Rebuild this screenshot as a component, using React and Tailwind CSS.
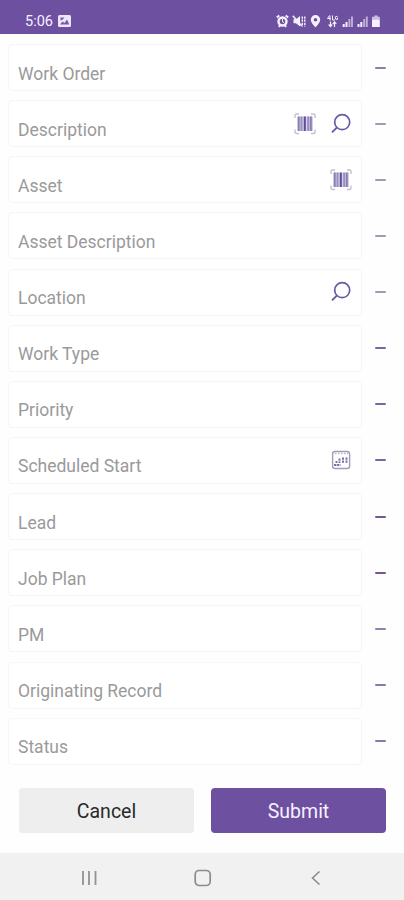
const fields = [
  { label: 'Work Order', dash: 'bg-[#8a7eae]' },
  { label: 'Description', dash: 'bg-[#a19ab1]', icons: ['barcode', 'search'] },
  { label: 'Asset', dash: 'bg-[#a19ab1]', icons: ['barcode'] },
  { label: 'Asset Description', dash: 'bg-[#a19ab1]' },
  { label: 'Location', dash: 'bg-[#a19ab1]', icons: ['search'] },
  { label: 'Work Type', dash: 'bg-[#7267a8]' },
  { label: 'Priority', dash: 'bg-[#7267a8]' },
  { label: 'Scheduled Start', dash: 'bg-[#7267a8]', icons: ['calendar'] },
  { label: 'Lead', dash: 'bg-[#745794]' },
  { label: 'Job Plan', dash: 'bg-[#745794]' },
  { label: 'PM', dash: 'bg-[#8d82b0]' },
  { label: 'Originating Record', dash: 'bg-[#8579ad]' },
  { label: 'Status', dash: 'bg-[#8579ad]' },
];

function BarcodeIcon() {
  return (
    <svg width="22" height="22" viewBox="0 0 22 22" fill="none">
      <path d="M1 5V2.5Q1 1 2.5 1H5M17 1h2.5Q21 1 21 2.5V5M21 16.500v2.500Q21 20.500 19.500 20.500H17M5 20.500H2.500Q1 20.500 1 19v-2.500" stroke="#c4c0cd" strokeWidth="1.4" />
      <path d="M3.500 3.500h15.500v14.500h-15.500z" fill="#d6d1e6" />
      <path d="M4.700 3.500v14.500M16.800 3.500v14.500" stroke="#8a7fb4" strokeWidth="2" />
      <path d="M7.500 3.500v14.500M14.200 3.500v14.500" stroke="#9a90bf" strokeWidth="2" />
      <path d="M10.800 3.500v14.500" stroke="#5f4a9c" strokeWidth="2" />
    </svg>
  );
}

function SearchIcon() {
  return (
    <svg width="22" height="22" viewBox="0 0 22 22" fill="none" stroke="#6a5aa6">
      <circle cx="12.200" cy="9.200" r="7.500" strokeWidth="1.700" />
      <path d="M7 14.400L2 19.400" strokeWidth="2" />
    </svg>
  );
}

function CalendarIcon() {
  return (
    <svg width="22" height="22" viewBox="0 0 22 22" fill="none">
      <rect x="2.600" y="2.500" width="17" height="17" rx="2.500" stroke="#a29cb8" strokeWidth="1.400" />
      <path d="M5 4.500h13" stroke="#bbb5ce" strokeWidth="1.500" strokeDasharray="1.500 1.500" />
      <path d="M9.500 9.500v4.500M13 8.500v5.500M16.500 8.500v5.500" stroke="#7d71ab" strokeWidth="2" strokeDasharray="2.300 0.600" />
      <path d="M6.500 12v2M4 16h6.500" stroke="#7d71ab" strokeWidth="2" strokeDasharray="2.300 0.600" />
    </svg>
  );
}

const icons = { barcode: BarcodeIcon, search: SearchIcon, calendar: CalendarIcon };

function StatusIcons() {
  return (
    <svg width="106" height="14" viewBox="0 0 106 14" fill="none" stroke="#f6f1ff">
      {/* alarm */}
      <circle cx="6.500" cy="7.500" r="4" strokeWidth="2.400" />
      <path d="M0.800 3.500L3.300 1.500M9.700 1.500l2.500 2M2.800 12.800l1.200-1.500M10.200 12.800L9 11.300" strokeWidth="1.900" />
      <path d="M6.500 5v2.800l1.600 0.800" strokeWidth="1" />
      {/* muted, vibrate */}
      <path d="M17.500 5.200h2.500l4-3.200v10.500l-4-3.300h-2.500z" fill="#f6f1ff" stroke="none" />
      <path d="M16.800 1.800l9 10.200" strokeWidth="1.600" />
      <path d="M26.300 2.500v10M28.800 2.500v10" strokeWidth="1.400" strokeDasharray="2.200 0.900" />
      {/* location pin */}
      <path d="M39.500 1a4.700 4.700 0 0 0-4.700 4.700c0 3 4.700 7.600 4.700 7.600s4.700-4.600 4.700-7.600A4.700 4.700 0 0 0 39.500 1zm0 3a1.800 1.800 0 1 1 0 3.600 1.800 1.800 0 0 1 0-3.600z" fill="#f6f1ff" fillRule="evenodd" stroke="none" />
      {/* network type and data arrows */}
      <path d="M53.500 1.500l-2 3h3.200M54 1.500v5M56.500 1.500v4.500h2.500M61.500 2.500q-2.200-1-2.200 1.300t2.200 1.500v-1.600" strokeWidth="1" />
      <path d="M54.500 7.500v5M52.700 10.500l1.800 2 1.800-2M58.500 13V8M56.700 9.800l1.800-2 1.800 2" strokeWidth="1.200" />
      {/* signal strength */}
      <path d="M67.700 10v3M70.500 8v5" strokeWidth="2" />
      <path d="M73.400 5v8M76 2.500v10.500" strokeWidth="1.900" strokeOpacity="0.600" />
      <path d="M82.500 10v3M85.300 8v5" strokeWidth="2" />
      <path d="M88.200 5v8M90.800 2.500v10.500" strokeWidth="1.900" strokeOpacity="0.600" />
      {/* battery */}
      <path d="M98.500 1.500h3v1.300h2.300v3H96v-3h2.500z" fill="#cdbfe3" stroke="none" />
      <path d="M96 5.500h7.800v7.500H96z" fill="#f6f1ff" stroke="none" />
    </svg>
  );
}

function StatusBar() {
  return (
    <header className="flex h-[34px] items-center justify-between bg-[#6d509f] pt-2 pr-[22px] pl-[25px] text-[#f6f1ff]">
      <div className="flex items-center gap-[5px]">
        <span className="pt-px text-[14.5px] leading-[18px]">5:06</span>
        <svg width="13" height="12" viewBox="0 0 13 12">
          <path d="M1.500 0h10Q13 0 13 1.500v9Q13 12 11.500 12h-10Q0 12 0 10.500v-9Q0 0 1.500 0z" fill="#eee6fa" />
          <path d="M2 9.500l2.500-3 2 1.500L9 4.500l2.300 5zM2.500 2.500h4l-2 2.300-2 0.800z" fill="#765ca8" />
        </svg>
      </div>
      <StatusIcons />
    </header>
  );
}

function FieldRow({ label, dash, icons: names = [] }) {
  return (
    <div className="flex h-[47px] items-center gap-[13px]">
      <div className="flex h-full w-[354px] items-center justify-between rounded-[4px] border-[1.5px] border-[#f6f6f6] bg-white pr-[9px] pl-[9px]">
        <span className="pt-[12px] text-[17.5px] leading-5 text-[#9a9a9a]">{label}</span>
        <div className="flex gap-[14px]">
          {names.map((name) => {
            const Icon = icons[name];
            return <Icon key={name} />;
          })}
        </div>
      </div>
      <span className={`h-[2px] w-[11px] rounded-[1px] ${dash}`} />
    </div>
  );
}

export default function App() {
  return (
    <div className="flex h-[900px] w-[404px] flex-col overflow-hidden bg-[#fefefe] font-['Roboto',sans-serif]">
      <StatusBar />
      <main className="flex flex-col gap-[9.150px] pt-[10px] pl-2">
        {fields.map((field) => (
          <FieldRow key={field.label} {...field} />
        ))}
      </main>
      <div className="mt-[23px] flex gap-[17px] pl-[19px]">
        <button className="h-[45px] w-[175px] rounded-[3px] bg-[#eeeeee] pt-[3px] text-[19.5px] text-[#292929]">Cancel</button>
        <button className="h-[45px] w-[175px] rounded-[4px] bg-[#6d509f] pt-[3px] text-[19.5px] text-[#f6f1ff]">Submit</button>
      </div>
      <nav className="mt-auto flex h-[47px] items-center bg-[#f1f1f1] pt-[3px] pl-[81px]">
        <svg width="16" height="16" viewBox="0 0 16 16" stroke="#929292" strokeWidth="1.800">
          <path d="M2 1v14M8 1v14M14.500 1v14" />
        </svg>
        <svg className="ml-[97px]" width="18" height="18" viewBox="0 0 18 18" fill="none" stroke="#8c8c8c" strokeWidth="1.700">
          <rect x="1.200" y="1.500" width="15" height="15" rx="4" />
        </svg>
        <svg className="ml-[98px]" width="12" height="16" viewBox="0 0 12 16" fill="none" stroke="#8c8c8c" strokeWidth="1.600">
          <path d="M9.500 1.500L2.500 8l7 6.500" />
        </svg>
      </nav>
    </div>
  );
}
